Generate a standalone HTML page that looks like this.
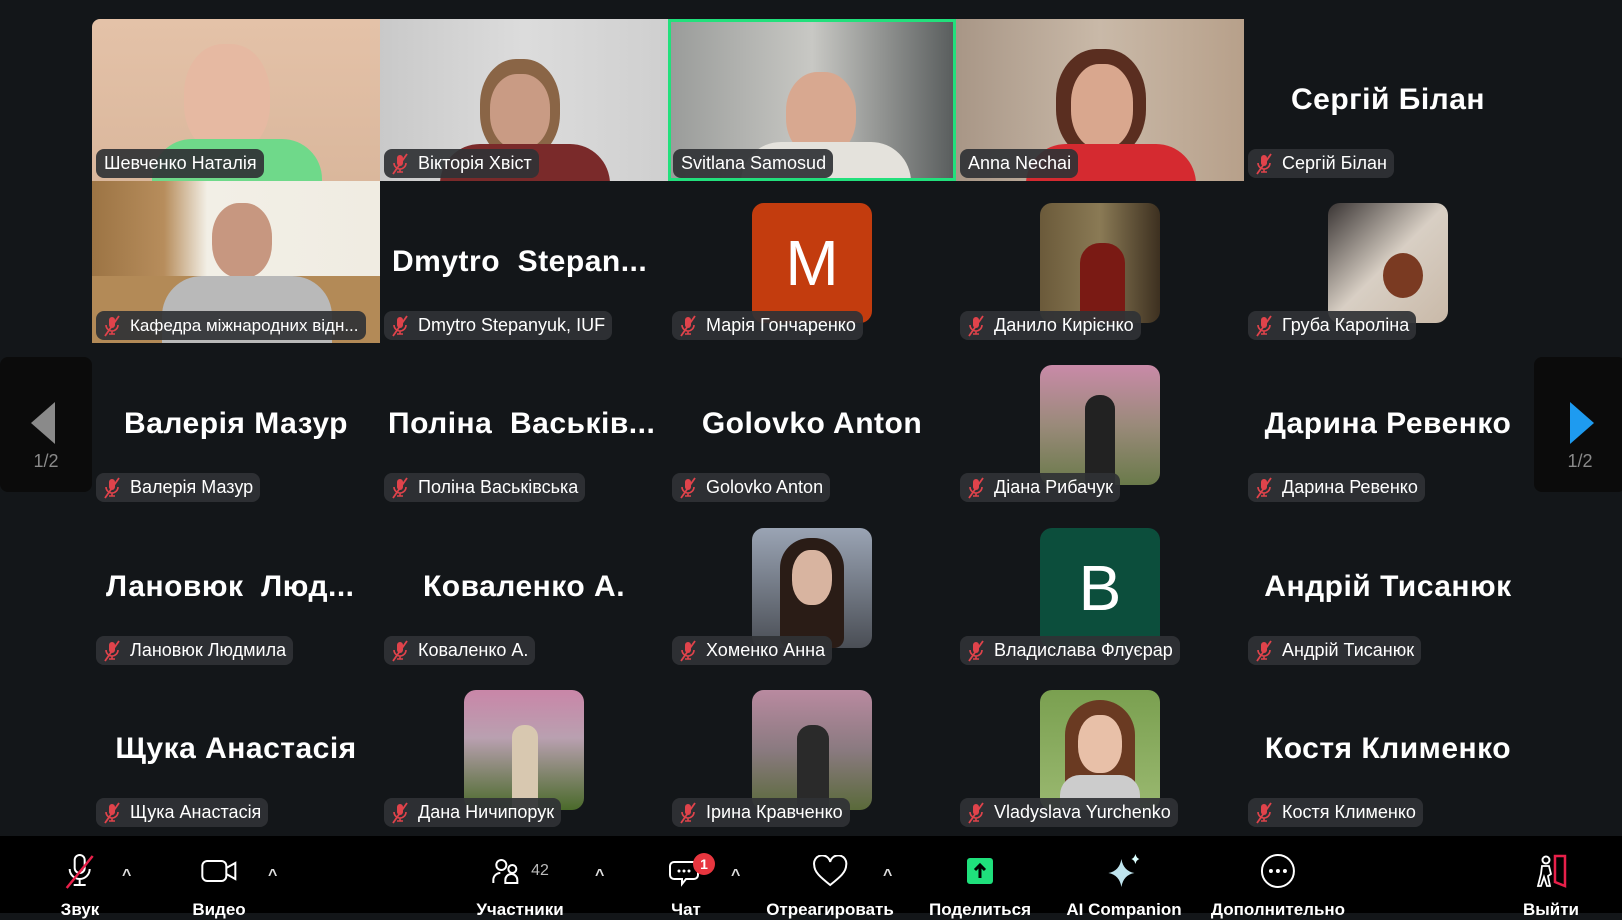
<!DOCTYPE html>
<html><head><meta charset="utf-8"><style>
*{margin:0;padding:0;box-sizing:border-box}
body{width:1622px;height:913px;background:#131619;position:relative;overflow:hidden;font-family:"Liberation Sans","DejaVu Sans",sans-serif;color:#fff}
.t{position:absolute;width:288px;height:162px;overflow:hidden}
.big{position:absolute;left:0;right:0;top:64px;text-align:center;font-weight:bold;font-size:30px;letter-spacing:0.5px;white-space:pre}
.lab{position:absolute;left:4px;top:130px;height:29px;background:rgba(48,50,53,.92);border-radius:8px;padding:0 7px 0 6px;font-size:18px;line-height:29px;white-space:nowrap;display:flex;align-items:center}
.lab svg{margin-right:8px}
.av{position:absolute;left:84px;top:22px;width:120px;height:120px;border-radius:12px}
.side{position:absolute;top:357px;width:92px;height:135px;background:#0b0b0b;border-radius:8px}
.side .n{position:absolute;bottom:20px;width:100%;text-align:center;color:#8a8a8a;font-size:18px}
.tb{position:absolute;left:0;top:836px;width:1622px;height:77px;background:#000}
.it{position:absolute;top:6px;text-align:center;transform:translateX(-50%);font-size:17px;font-weight:bold;white-space:nowrap}
.it .ic{height:58px;display:flex;align-items:center;justify-content:center}
.car{position:absolute;top:27px;font-size:16px;color:#ddd;font-weight:bold}
</style></head><body>
<svg width="0" height="0" style="position:absolute"><defs>
<symbol id="m" viewBox="0 0 20 22"><rect x="7" y="2" width="6" height="11" rx="3" fill="#e0434b"/><path d="M4 10a6 6 0 0 0 12 0M10 16v3M7 19h6" stroke="#e0434b" stroke-width="1.6" fill="none"/><path d="M3 21L17 1" stroke="#e0434b" stroke-width="1.8"/></symbol>
</defs></svg>

<!-- row 1 -->
<div class="t" style="left:92px;top:19px;background:linear-gradient(180deg,#e4c2a8,#dab79c);border-radius:8px 0 0 0">
<div style="position:absolute;left:92px;top:25px;width:86px;height:110px;border-radius:45%;background:#e6b9a2"></div>
<div style="position:absolute;left:60px;top:120px;width:170px;height:50px;border-radius:40px 40px 0 0;background:#6fd98a"></div>
<div class="lab" style="padding-left:8px">Шевченко Наталія</div></div>
<div class="t" style="left:380px;top:19px;background:linear-gradient(90deg,#c9c9c9,#dcdcdc,#cfcfcf)">
<div style="position:absolute;left:100px;top:40px;width:80px;height:100px;border-radius:45%;background:#8a6546"></div>
<div style="position:absolute;left:110px;top:55px;width:60px;height:75px;border-radius:45%;background:#c99b84"></div>
<div style="position:absolute;left:60px;top:125px;width:170px;height:50px;border-radius:40px 40px 0 0;background:#7a2a2a"></div>
<div class="lab"><svg width="20" height="22"><use href="#m"/></svg>Вікторія Хвіст</div></div>
<div class="t" style="left:668px;top:19px;background:linear-gradient(90deg,#9a9c9a,#c8c8c4,#5a5e5e);border:3px solid #22e07c">
<div style="position:absolute;left:115px;top:50px;width:70px;height:85px;border-radius:45%;background:#d8a890"></div>
<div style="position:absolute;left:70px;top:120px;width:170px;height:50px;border-radius:40px 40px 0 0;background:#e4e2dc"></div>
<div class="lab" style="left:2px;top:127px;padding-left:8px">Svitlana Samosud</div></div>
<div class="t" style="left:956px;top:19px;background:linear-gradient(90deg,#a89686,#c9b9a8,#b7a08a)">
<div style="position:absolute;left:100px;top:30px;width:90px;height:110px;border-radius:45%;background:#5a2e20"></div>
<div style="position:absolute;left:115px;top:45px;width:62px;height:85px;border-radius:45%;background:#d9a78e"></div>
<div style="position:absolute;left:70px;top:125px;width:170px;height:50px;border-radius:40px 40px 0 0;background:#d52a30"></div>
<div class="lab" style="padding-left:8px">Anna Nechai</div></div>
<div class="t" style="left:1244px;top:19px"><div class="big" style="top:64px">Сергій Білан</div>
<div class="lab"><svg width="20" height="22"><use href="#m"/></svg>Сергій Білан</div></div>

<!-- row 2 -->
<div class="t" style="left:92px;top:181px;background:linear-gradient(90deg,#9c7444 0,#b78d5c 25%,#f2efe6 40%,#f0ece2 100%)">
<div style="position:absolute;left:0;top:95px;width:288px;height:70px;background:#b38a57"></div>
<div style="position:absolute;left:120px;top:22px;width:60px;height:75px;border-radius:45%;background:#c79780"></div>
<div style="position:absolute;left:70px;top:95px;width:170px;height:70px;border-radius:40px 40px 0 0;background:#b9b9b9"></div>
<div class="lab" style="font-size:17px"><svg width="20" height="22"><use href="#m"/></svg>Кафедра міжнародних відн...</div></div>
<div class="t" style="left:380px;top:181px"><div class="big" style="text-align:left;left:12px">Dmytro  Stepan...</div>
<div class="lab"><svg width="20" height="22"><use href="#m"/></svg>Dmytro Stepanyuk, IUF</div></div>
<div class="t" style="left:668px;top:181px"><div class="av" style="background:#c33c0e;font-size:64px;line-height:120px;text-align:center">M</div>
<div class="lab"><svg width="20" height="22"><use href="#m"/></svg>Марія Гончаренко</div></div>
<div class="t" style="left:956px;top:181px"><div class="av" style="background:linear-gradient(90deg,#6b5a3a,#8a7a55,#3d3020)"><div style="position:absolute;left:40px;top:40px;width:45px;height:80px;background:#7a1a14;border-radius:20px 20px 0 0"></div></div>
<div class="lab"><svg width="20" height="22"><use href="#m"/></svg>Данило Кирієнко</div></div>
<div class="t" style="left:1244px;top:181px"><div class="av" style="background:linear-gradient(135deg,#3a3534,#d8cfc4 50%,#c9b9a8)"><div style="position:absolute;left:55px;top:50px;width:40px;height:45px;background:#7a3a22;border-radius:50%"></div></div>
<div class="lab"><svg width="20" height="22"><use href="#m"/></svg>Груба Кароліна</div></div>

<!-- row 3 -->
<div class="t" style="left:92px;top:343px"><div class="big">Валерія Мазур</div>
<div class="lab"><svg width="20" height="22"><use href="#m"/></svg>Валерія Мазур</div></div>
<div class="t" style="left:380px;top:343px"><div class="big" style="text-align:left;left:8px">Поліна  Васьків...</div>
<div class="lab"><svg width="20" height="22"><use href="#m"/></svg>Поліна Васьківська</div></div>
<div class="t" style="left:668px;top:343px"><div class="big">Golovko Anton</div>
<div class="lab"><svg width="20" height="22"><use href="#m"/></svg>Golovko Anton</div></div>
<div class="t" style="left:956px;top:343px"><div class="av" style="background:linear-gradient(180deg,#c98aa8,#9a8a7a 50%,#6a7a4a)"><div style="position:absolute;left:45px;top:30px;width:30px;height:90px;background:#222;border-radius:14px 14px 0 0"></div></div>
<div class="lab"><svg width="20" height="22"><use href="#m"/></svg>Діана Рибачук</div></div>
<div class="t" style="left:1244px;top:343px"><div class="big">Дарина Ревенко</div>
<div class="lab"><svg width="20" height="22"><use href="#m"/></svg>Дарина Ревенко</div></div>

<!-- row 4 -->
<div class="t" style="left:92px;top:506px"><div class="big" style="text-align:left;left:14px">Лановюк  Люд...</div>
<div class="lab"><svg width="20" height="22"><use href="#m"/></svg>Лановюк Людмила</div></div>
<div class="t" style="left:380px;top:506px"><div class="big">Коваленко А.</div>
<div class="lab"><svg width="20" height="22"><use href="#m"/></svg>Коваленко А.</div></div>
<div class="t" style="left:668px;top:506px"><div class="av" style="background:linear-gradient(180deg,#9aa4b4,#4a4e55)"><div style="position:absolute;left:28px;top:10px;width:64px;height:110px;background:#2a1c16;border-radius:30px 30px 10px 10px"></div><div style="position:absolute;left:40px;top:22px;width:40px;height:55px;background:#d8b4a0;border-radius:45%"></div></div>
<div class="lab"><svg width="20" height="22"><use href="#m"/></svg>Хоменко Анна</div></div>
<div class="t" style="left:956px;top:506px"><div class="av" style="background:#0c4e3c;font-size:64px;line-height:120px;text-align:center">B</div>
<div class="lab"><svg width="20" height="22"><use href="#m"/></svg>Владислава Флуєрар</div></div>
<div class="t" style="left:1244px;top:506px"><div class="big">Андрій Тисанюк</div>
<div class="lab"><svg width="20" height="22"><use href="#m"/></svg>Андрій Тисанюк</div></div>

<!-- row 5 -->
<div class="t" style="left:92px;top:668px"><div class="big">Щука Анастасія</div>
<div class="lab"><svg width="20" height="22"><use href="#m"/></svg>Щука Анастасія</div></div>
<div class="t" style="left:380px;top:668px"><div class="av" style="background:linear-gradient(180deg,#c986a8,#b9a0b0 40%,#4a6a2a)"><div style="position:absolute;left:48px;top:35px;width:26px;height:85px;background:#d8c8b0;border-radius:12px 12px 0 0"></div></div>
<div class="lab"><svg width="20" height="22"><use href="#m"/></svg>Дана Ничипорук</div></div>
<div class="t" style="left:668px;top:668px"><div class="av" style="background:linear-gradient(180deg,#b98aa0,#8a7a80 50%,#5a6a3a)"><div style="position:absolute;left:45px;top:35px;width:32px;height:85px;background:#2a2a2a;border-radius:14px 14px 0 0"></div></div>
<div class="lab"><svg width="20" height="22"><use href="#m"/></svg>Ірина Кравченко</div></div>
<div class="t" style="left:956px;top:668px"><div class="av" style="background:linear-gradient(180deg,#7aa050,#9ab870)"><div style="position:absolute;left:25px;top:10px;width:70px;height:110px;background:#6a3a22;border-radius:35px 35px 0 0"></div><div style="position:absolute;left:38px;top:25px;width:44px;height:58px;background:#e8c0a8;border-radius:45%"></div><div style="position:absolute;left:20px;top:85px;width:80px;height:35px;background:#ccc;border-radius:20px 20px 0 0"></div></div>
<div class="lab"><svg width="20" height="22"><use href="#m"/></svg>Vladyslava Yurchenko</div></div>
<div class="t" style="left:1244px;top:668px"><div class="big">Костя Клименко</div>
<div class="lab"><svg width="20" height="22"><use href="#m"/></svg>Костя Клименко</div></div>

<!-- side -->
<div class="side" style="left:0"><svg style="position:absolute;left:31px;top:45px" width="25" height="42"><path d="M24 0L0 21L24 42Z" fill="#8a8a8a"/></svg><div class="n">1/2</div></div>
<div class="side" style="left:1534px"><svg style="position:absolute;left:36px;top:45px" width="25" height="42"><path d="M0 0L24 21L0 42Z" fill="#1e9bf0"/></svg><div class="n">1/2</div></div>

<!-- toolbar -->
<div class="tb">
<div class="it" style="left:80px"><div class="ic"><svg width="34" height="38" viewBox="0 0 34 38"><rect x="12" y="3" width="10" height="18" rx="5" fill="none" stroke="#fff" stroke-width="2"/><path d="M7 17a10 10 0 0 0 20 0M17 27v6M11 33h12" stroke="#fff" stroke-width="2" fill="none"/><path d="M4 36L30 4" stroke="#e8204a" stroke-width="2.5"/></svg></div>Звук</div>
<div class="car" style="left:122px;top:31px">^</div>
<div class="it" style="left:219px"><div class="ic"><svg width="38" height="26"><rect x="2" y="3" width="24" height="20" rx="5" fill="none" stroke="#fff" stroke-width="2"/><path d="M26 10l9-5v16l-9-5" fill="none" stroke="#fff" stroke-width="2"/></svg></div>Видео</div>
<div class="car" style="left:268px;top:31px">^</div>
<div class="it" style="left:520px"><div class="ic"><svg width="30" height="28"><circle cx="10" cy="8" r="5" fill="none" stroke="#fff" stroke-width="2"/><circle cx="21" cy="12" r="4" fill="none" stroke="#fff" stroke-width="2"/><path d="M2 26v-3a7 7 0 0 1 7-7M14 26v-3a6 6 0 0 1 12 0v3z" fill="none" stroke="#fff" stroke-width="2"/></svg><span style="font-size:16px;color:#bbb;font-weight:normal;margin-left:10px">42</span></div>Участники</div>
<div class="car" style="left:595px;top:31px">^</div>
<div class="it" style="left:686px"><div class="ic"><svg width="34" height="34"><path d="M5 8h20a4 4 0 0 1 4 4v9a4 4 0 0 1-4 4h-8l-4 5v-5H5a4 4 0 0 1-4-4v-9a4 4 0 0 1 4-4z" fill="none" stroke="#fff" stroke-width="2"/><circle cx="10" cy="17" r="1.5" fill="#fff"/><circle cx="15" cy="17" r="1.5" fill="#fff"/><circle cx="20" cy="17" r="1.5" fill="#fff"/></svg></div>Чат</div>
<div style="position:absolute;left:693px;top:17px;width:22px;height:22px;border-radius:50%;background:#e8363f;font-size:14px;font-weight:bold;text-align:center;line-height:22px">1</div>
<div class="car" style="left:731px;top:31px">^</div>
<div class="it" style="left:830px"><div class="ic"><svg width="36" height="32"><path d="M18 30C8 22 2 17 2 10a8 8 0 0 1 16-3 8 8 0 0 1 16 3c0 7-6 12-16 20z" fill="none" stroke="#fff" stroke-width="2"/></svg></div>Отреагировать</div>
<div class="car" style="left:883px;top:31px">^</div>
<div class="it" style="left:980px"><div class="ic"><svg width="26" height="26"><rect width="26" height="26" rx="3" fill="#1fe07c"/><path d="M13 20V7M8 12l5-5 5 5" stroke="#000" stroke-width="3" fill="none"/></svg></div>Поделиться</div>
<div class="it" style="left:1124px"><div class="ic"><svg width="36" height="36"><path d="M15 6Q17 18 28 20Q17 22 15 34Q13 22 2 20Q13 18 15 6z" fill="#bfe4ee"/><path d="M29 1Q30 5 33 6Q30 7 29 11Q28 7 25 6Q28 5 29 1z" fill="#dff"/></svg></div>AI Companion</div>
<div class="it" style="left:1278px"><div class="ic"><svg width="36" height="36"><circle cx="18" cy="18" r="16" fill="none" stroke="#fff" stroke-width="2"/><circle cx="11" cy="18" r="2" fill="#fff"/><circle cx="18" cy="18" r="2" fill="#fff"/><circle cx="25" cy="18" r="2" fill="#fff"/></svg></div>Дополнительно</div>
<div class="it" style="left:1551px"><div class="ic"><svg width="36" height="36"><path d="M22 3h10v30l-10-4z" fill="none" stroke="#e8204a" stroke-width="2.5"/><circle cx="13" cy="7" r="3.5" fill="none" stroke="#fff" stroke-width="2"/><path d="M9 13h7l2 8-3 2 2 10h-3l-3-9-3 9H5l3-12z" fill="none" stroke="#fff" stroke-width="1.8"/></svg></div>Выйти</div>
</div>
</body></html>
